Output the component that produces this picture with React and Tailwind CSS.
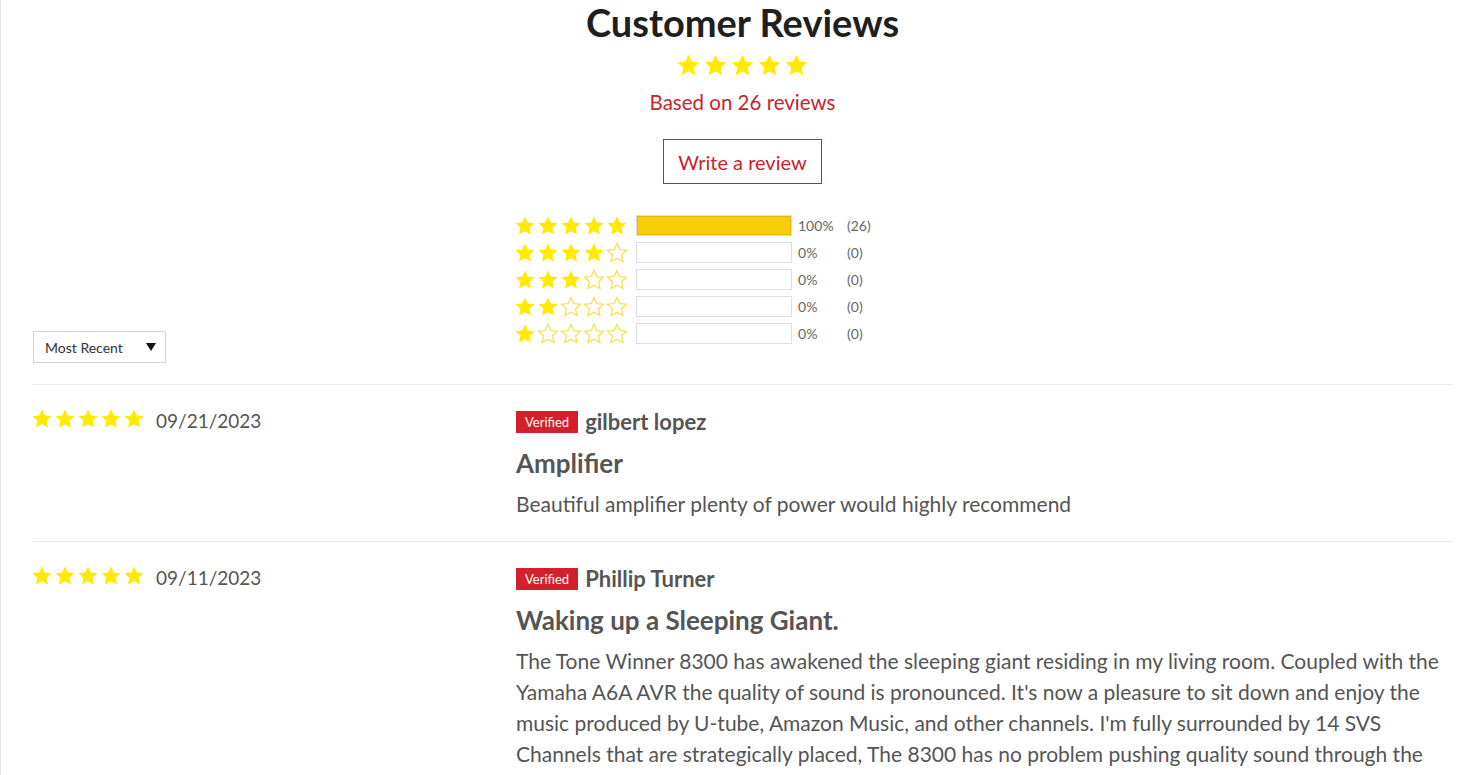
const STAR = "12,1.6 15.1,8.2 22.4,9 17,14 18.5,21.3 12,17.6 5.5,21.3 7,14 1.6,9 8.9,8.2"

const Star = ({ filled = true, size = 22 }) => (
  <svg width={size} height={size} viewBox="0 0 24 24">
    {filled ? (
      <polygon points={STAR} fill="#ffea00" />
    ) : (
      <polygon points={STAR} fill="none" stroke="#f7e04a" strokeWidth="1.4" strokeLinejoin="miter" />
    )}
  </svg>
)

const Stars = ({ count = 5, size = 22, gap = "gap-[1px]" }) => (
  <div className={`flex ${gap}`}>
    {[0, 1, 2, 3, 4].map((i) => (
      <Star key={i} filled={i < count} size={size} />
    ))}
  </div>
)

const histogram = [
  { stars: 5, pct: 100, n: 26 },
  { stars: 4, pct: 0, n: 0 },
  { stars: 3, pct: 0, n: 0 },
  { stars: 2, pct: 0, n: 0 },
  { stars: 1, pct: 0, n: 0 },
]

const reviews = [
  {
    date: "09/21/2023",
    name: "gilbert lopez",
    title: "Amplifier",
    body: "Beautiful amplifier plenty of power would highly recommend",
  },
  {
    date: "09/11/2023",
    name: "Phillip Turner",
    title: "Waking up a Sleeping Giant.",
    body:
      "The Tone Winner 8300 has awakened the sleeping giant residing in my living room. Coupled with the Yamaha A6A AVR the quality of sound is pronounced. It's now a pleasure to sit down and enjoy the music produced by U-tube, Amazon Music, and other channels. I'm fully surrounded by 14 SVS Channels that are strategically placed, The 8300 has no problem pushing quality sound through the speakers with ease and clarity.",
  },
]

export default function App() {
  return (
    <div className="min-h-[775px] bg-white border-l border-[#e6e6e6] font-['Lato','Open_Sans',sans-serif] overflow-hidden">
      <div className="pl-[32px] pr-[32px]">
        {/* summary */}
        <div className="flex flex-col items-center">
          <h2 className="mt-[2px] text-[38px] leading-[40px] font-bold text-[#1f1f1f]">Customer Reviews</h2>
          <div className="mt-[11px]">
            <Stars size={25} gap="gap-[2px]" />
          </div>
          <div className="mt-[11px] text-[20.5px] leading-[26px] text-[#c5252c]">Based on 26 reviews</div>
          <button className="mt-[24px] w-[159px] h-[45px] border border-[#c5252c] text-[20px] text-[#c5252c]">
            Write a review
          </button>
        </div>

        <div className="flex items-end mt-[31px]">
          <div className="w-[483px] shrink-0">
            <div className="w-[133px] h-[32px] border border-[#d4d4d4] flex items-center justify-between pl-[11px] pr-[9px] text-[14px] text-[#333]">
              <span>Most Recent</span>
              <span className="w-0 h-0 border-l-[5px] border-r-[5px] border-t-[8px] border-l-transparent border-r-transparent border-t-[#111]" />
            </div>
          </div>
          <div className="flex flex-col gap-[6px] pb-[19px] -ml-[2px]">
            {histogram.map((h) => (
              <div key={h.stars} className="flex items-center h-[21px]">
                <Stars count={h.stars} size={22} gap="gap-[1px]" />
                <div className="ml-[8px] w-[156px] h-[21px] border border-[#dedede]">
                  {h.pct > 0 && <div className="h-full bg-[#f9cd0c] border border-[#e8b90a]" style={{ width: `${h.pct}%` }} />}
                </div>
                <span className="ml-[6px] w-[49px] text-[14px] text-[#666]">{h.pct}%</span>
                <span className="text-[14px] text-[#666]">({h.n})</span>
              </div>
            ))}
          </div>
        </div>

        <div className="mt-[21px] border-t border-[#e8e8e8]">
          {reviews.map((r, i) => (
            <div key={i} className="flex pt-[23px] pb-[22px] border-b border-[#e8e8e8]">
              <div className="w-[483px] shrink-0 flex items-center h-[26px]">
                <div className="-ml-[2px] -mt-[4px]">
                  <Stars size={22} gap="gap-[1px]" />
                </div>
                <span className="ml-[11px] text-[19px] text-[#555]">{r.date}</span>
              </div>
              <div className="flex-1 text-[#555]">
                <div className="flex items-center h-[28px]">
                  <span className="bg-[#d3202c] text-white text-[13px] leading-[22px] px-[9px]">Verified</span>
                  <span className="ml-[7px] text-[22px] font-bold leading-[28px]">{r.name}</span>
                </div>
                <h3 className="mt-[12px] text-[26px] font-bold leading-[30px]">{r.title}</h3>
                <p className="mt-[10px] text-[21px] leading-[31px]">{r.body}</p>
              </div>
            </div>
          ))}
        </div>
      </div>
    </div>
  )
}
